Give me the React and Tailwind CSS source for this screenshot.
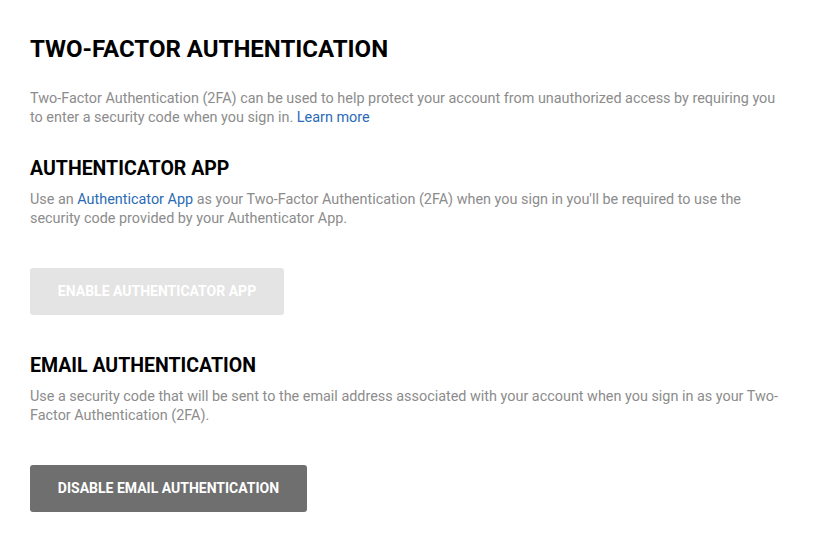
import React from 'react';

const font = { fontFamily: '"Roboto", "Liberation Sans", sans-serif' };

const App = () => {
  return (
    <div className="min-h-screen bg-white pl-[30px] pr-[30px] pt-[35px]" style={font}>
      <h1 className="text-[24px] leading-[29px] font-bold text-black">TWO-FACTOR AUTHENTICATION</h1>

      <p className="mt-[25px] text-[14.4px] leading-[19px] text-[#8c8c8c]">
        Two-Factor Authentication (2FA) can be used to help protect your account from unauthorized access by requiring you
        <br />
        to enter a security code when you sign in. <a href="#" className="text-[#2a6bb5]">Learn more</a>
      </p>

      <h2 className="mt-[30px] text-[19.5px] leading-[24px] font-bold text-black">AUTHENTICATOR APP</h2>
      <p className="mt-[9px] text-[14.4px] leading-[19px] text-[#8c8c8c]">
        Use an <a href="#" className="text-[#2a6bb5]">Authenticator App</a> as your Two-Factor Authentication (2FA) when you sign in you'll be required to use the
        <br />
        security code provided by your Authenticator App.
      </p>
      <button
        disabled
        className="mt-[40px] block h-[47px] w-[254px] rounded-[3px] bg-[#e4e4e4] text-[14px] font-bold text-white"
      >
        ENABLE AUTHENTICATOR APP
      </button>

      <h2 className="mt-[39px] text-[19.5px] leading-[24px] font-bold text-black">EMAIL AUTHENTICATION</h2>
      <p className="mt-[9px] text-[14.4px] leading-[19px] text-[#8c8c8c]">
        Use a security code that will be sent to the email address associated with your account when you sign in as your Two-
        <br />
        Factor Authentication (2FA).
      </p>
      <button className="mt-[40px] block h-[47px] w-[277px] rounded-[3px] bg-[#6f6f6f] text-[14px] font-bold text-white">
        DISABLE EMAIL AUTHENTICATION
      </button>
    </div>
  );
};

export default App;
